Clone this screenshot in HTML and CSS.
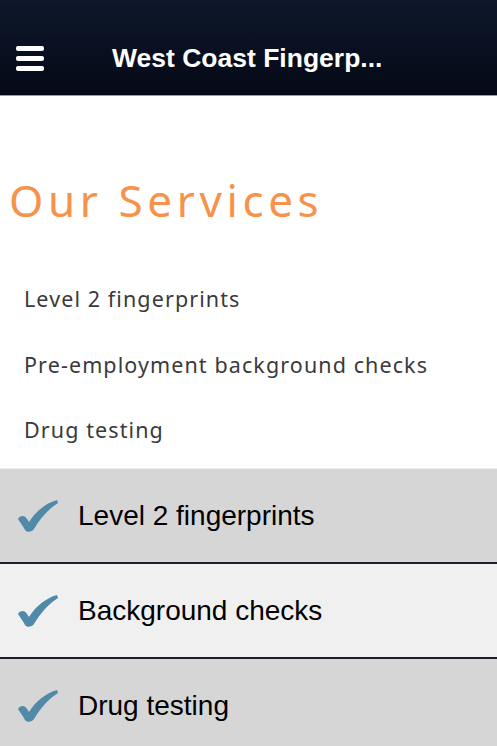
FILE: index.html
```html
<!DOCTYPE html>
<html>

<head>
    <title>Our Services</title>
    <meta charset="UTF-8">
    <link rel="stylesheet" href="styles.css">
</head>

<body>
    <div class="topbar">
        <a href="#" class="menu-btn">
            <span></span>
            <span></span>
            <span></span>
        </a>
        <h1 class="topbar-title">West Coast Fingerp...</h1>
    </div>

    <div class="content">
        <h2 class="page-heading">Our Services</h2>
        <ul class="service-list">
            <li>Level 2 fingerprints</li>
            <li>Pre-employment background checks</li>
            <li>Drug testing</li>
        </ul>
    </div>

    <div class="check-list">
        <div class="check-row">
            <svg class="check" viewBox="0 0 40 32"><path d="M0 19 C2 15 7 15 9 19 L11 22 C18 11 28 3 39 0 L40 3 C30 9 22 19 16 29 C14 32 9 33 7 30 C5 26 2 22 0 19 Z" /></svg>
            <span>Level 2 fingerprints</span>
        </div>
        <div class="check-row light">
            <svg class="check" viewBox="0 0 40 32"><path d="M0 19 C2 15 7 15 9 19 L11 22 C18 11 28 3 39 0 L40 3 C30 9 22 19 16 29 C14 32 9 33 7 30 C5 26 2 22 0 19 Z" /></svg>
            <span>Background checks</span>
        </div>
        <div class="check-row">
            <svg class="check" viewBox="0 0 40 32"><path d="M0 19 C2 15 7 15 9 19 L11 22 C18 11 28 3 39 0 L40 3 C30 9 22 19 16 29 C14 32 9 33 7 30 C5 26 2 22 0 19 Z" /></svg>
            <span>Drug testing</span>
        </div>
    </div>
</body>

</html>
```

FILE: styles.css
```css
body {
    margin: 0;
    background-color: #fff;
    font-family: "Liberation Sans", Arial, sans-serif;
}

/* Top bar */
.topbar {
    height: 96px;
    background: linear-gradient(to bottom, #0e172b, #050916);
    border-bottom: 1px solid #9a9a9a;
    display: flex;
    align-items: center;
    padding-top: 22px;
    box-sizing: border-box;
}

.menu-btn {
    display: flex;
    flex-direction: column;
    gap: 5px;
    width: 28px;
    margin-left: 16px;
}

.menu-btn span {
    display: block;
    height: 5px;
    border-radius: 2px;
    background-color: #fff;
}

.topbar-title {
    margin: 0 0 0 68px;
    color: #fff;
    font-size: 26.5px;
    font-weight: bold;
    white-space: nowrap;
}

/* Services */
.content {
    padding: 79px 0 5px;
}

.page-heading {
    margin: 0 0 0 9px;
    color: #f7924a;
    font-family: "Noto Sans", sans-serif;
    font-weight: normal;
    font-size: 44px;
    line-height: 50px;
    letter-spacing: 4.6px;
}

.service-list {
    list-style: none;
    margin: 41px 0 0;
    padding: 0 0 0 24px;
}

.service-list li {
    color: #3a3a3a;
    font-family: "Noto Sans", sans-serif;
    font-size: 21.5px;
    line-height: 65.5px;
    letter-spacing: 1.1px;
}

/* Checked rows */
.check-list {
    border-top: 1px solid #ececec;
}

.check-row {
    display: flex;
    align-items: center;
    height: 91px;
    padding: 2px 0 0 18px;
    background-color: #d6d6d6;
    border-bottom: 2px solid #1c1f33;
    font-size: 28px;
    color: #000;
}

.check-row.light {
    background-color: #f0f0f0;
}

.check {
    width: 40px;
    height: 32px;
    margin-right: 20px;
    fill: #5189a9;
}
```
